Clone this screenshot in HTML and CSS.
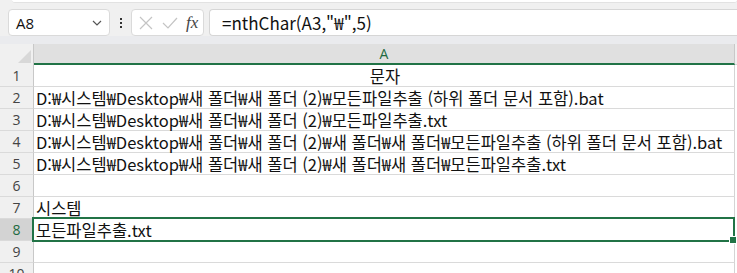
FILE: index.html
```html
<!DOCTYPE html>
<html lang="ko">
<head>
  <meta charset="UTF-8" />
  <title>nthChar</title>
  <link rel="stylesheet" href="styles.css">
</head>
<body>
<div class="ribbon-edge"></div>
<div class="formula-bar">
  <div class="name-box">
    <span>A8</span>
    <svg class="chevron" width="10" height="6" viewBox="0 0 10 6"><path d="M1 1 L5 5 L9 1" fill="none" stroke="#555" stroke-width="1.2"/></svg>
  </div>
  <div class="dots"><i></i><i></i><i></i></div>
  <div class="fx-box">
    <svg width="14" height="14" viewBox="0 0 14 14"><path d="M1 1 L13 13 M13 1 L1 13" stroke="#c4c4c4" stroke-width="1.2" fill="none"/></svg>
    <svg width="16" height="14" viewBox="0 0 16 14"><path d="M1 7 L6 12 L15 2" stroke="#c4c4c4" stroke-width="1.2" fill="none"/></svg>
    <span class="fx">fx</span>
  </div>
  <div class="formula">=nthChar(A3,"₩",5)</div>
</div>
<div class="gap"></div>
<div class="sheet">
  <div class="corner"></div>
  <div class="col-head sel">A</div>
  <div class="rest head"></div>

  <div class="row-head">1</div><div class="cell center">문자</div><div class="rest"></div>
  <div class="row-head">2</div><div class="cell">D:₩시스템₩Desktop₩새 폴더₩새 폴더 (2)₩모든파일추출 (하위 폴더 문서 포함).bat</div><div class="rest"></div>
  <div class="row-head">3</div><div class="cell">D:₩시스템₩Desktop₩새 폴더₩새 폴더 (2)₩모든파일추출.txt</div><div class="rest"></div>
  <div class="row-head">4</div><div class="cell">D:₩시스템₩Desktop₩새 폴더₩새 폴더 (2)₩새 폴더₩새 폴더₩모든파일추출 (하위 폴더 문서 포함).bat</div><div class="rest"></div>
  <div class="row-head">5</div><div class="cell">D:₩시스템₩Desktop₩새 폴더₩새 폴더 (2)₩새 폴더₩새 폴더₩모든파일추출.txt</div><div class="rest"></div>
  <div class="row-head">6</div><div class="cell"></div><div class="rest"></div>
  <div class="row-head">7</div><div class="cell">시스템</div><div class="rest"></div>
  <div class="row-head active">8</div><div class="cell selected">모든파일추출.txt</div><div class="rest"></div>
  <div class="row-head">9</div><div class="cell"></div><div class="rest"></div>
  <div class="row-head">10</div><div class="cell"></div><div class="rest"></div>
</div>
</body>
</html>
```

FILE: styles.css
```css
* {
  margin: 0;
  padding: 0;
  box-sizing: border-box;
}
body {
  background: #f0f0f0;
  font-family: "Noto Sans CJK KR", "Noto Sans", sans-serif;
  color: #111;
  overflow: hidden;
}
.ribbon-edge {
  height: 3px;
  margin-left: 12px;
  background: #fff;
  border-bottom: 1px solid #e2e2e2;
  border-radius: 0 0 4px 4px;
}
.formula-bar {
  display: flex;
  align-items: center;
  height: 27px;
  margin-top: 6px;
}
.name-box {
  width: 102px;
  height: 27px;
  margin-left: 8px;
  background: #fff;
  border: 1px solid #dadada;
  border-radius: 4px;
  display: flex;
  align-items: center;
  justify-content: space-between;
  padding: 0 7px 0 7px;
  font-family: "Open Sans", sans-serif;
  font-size: 15px;
}
.dots {
  width: 21px;
  display: flex;
  flex-direction: column;
  align-items: center;
  gap: 2px;
}
.dots i {
  width: 2px;
  height: 2px;
  background: #333;
}
.fx-box {
  width: 73px;
  height: 27px;
  background: #fff;
  border: 1px solid #dadada;
  border-radius: 4px;
  display: flex;
  align-items: center;
  gap: 9px;
  padding-left: 7px;
}
.fx {
  font-family: "Liberation Serif", serif;
  font-style: italic;
  font-size: 17px;
  color: #444;
  margin-left: -1px;
}
.formula {
  flex: 1;
  height: 27px;
  margin-left: 5px;
  background: #fff;
  border: 1px solid #d6d6d6;
  border-right: none;
  border-radius: 4px 0 0 4px;
  padding-left: 12px;
  line-height: 25px;
  font-size: 17px;
  font-family: "Noto Sans CJK KR", sans-serif;
}
.gap {
  height: 8px;
  background: #eaebee;
}
.sheet {
  display: grid;
  grid-template-columns: 34px 701px 1fr;
  grid-template-rows: 21px repeat(10, 22px);
  background: #fff;
  font-size: 16.5px;
}
.corner {
  background: #f0f0f0;
  border-right: 1px solid #c8c8c8;
  position: relative;
}
.corner::after {
  content: "";
  position: absolute;
  right: 2px;
  bottom: 2px;
  border-style: solid;
  border-width: 0 0 13px 13px;
  border-color: transparent transparent #d8d8d8 transparent;
}
.col-head {
  background: #e0e0e0;
  border-right: 1px solid #c8c8c8;
  border-bottom: 2px solid #217346;
  text-align: center;
  font-family: "Open Sans", sans-serif;
  font-size: 14px;
  line-height: 19px;
  color: #1e6b41;
}
.rest.head {
  background: #f0f0f0;
  border-bottom: 1px solid #d4d4d4;
}
.row-head {
  background: #f0f0f0;
  border-right: 1px solid #c8c8c8;
  border-bottom: 1px solid #dadada;
  text-align: center;
  font-family: "Open Sans", sans-serif;
  font-size: 14px;
  line-height: 21px;
  color: #444;
}
.row-head.active {
  background: #d3d3d3;
  color: #1e6b41;
}
.cell {
  border-right: 1px solid #d4d4d4;
  border-bottom: 1px solid #dadada;
  padding-left: 2px;
  line-height: 22px;
  white-space: nowrap;
}
.cell.center {
  text-align: center;
}
.cell.selected {
  position: relative;
}
.cell.selected::before {
  content: "";
  position: absolute;
  left: -2px;
  top: -2px;
  right: -1px;
  bottom: -2px;
  border: 2px solid #217346;
}
.cell.selected::after {
  content: "";
  position: absolute;
  right: -3px;
  bottom: -4px;
  width: 6px;
  height: 6px;
  background: #217346;
  border: 1px solid #fff;
}
.rest {
  background: #fff;
}
```
